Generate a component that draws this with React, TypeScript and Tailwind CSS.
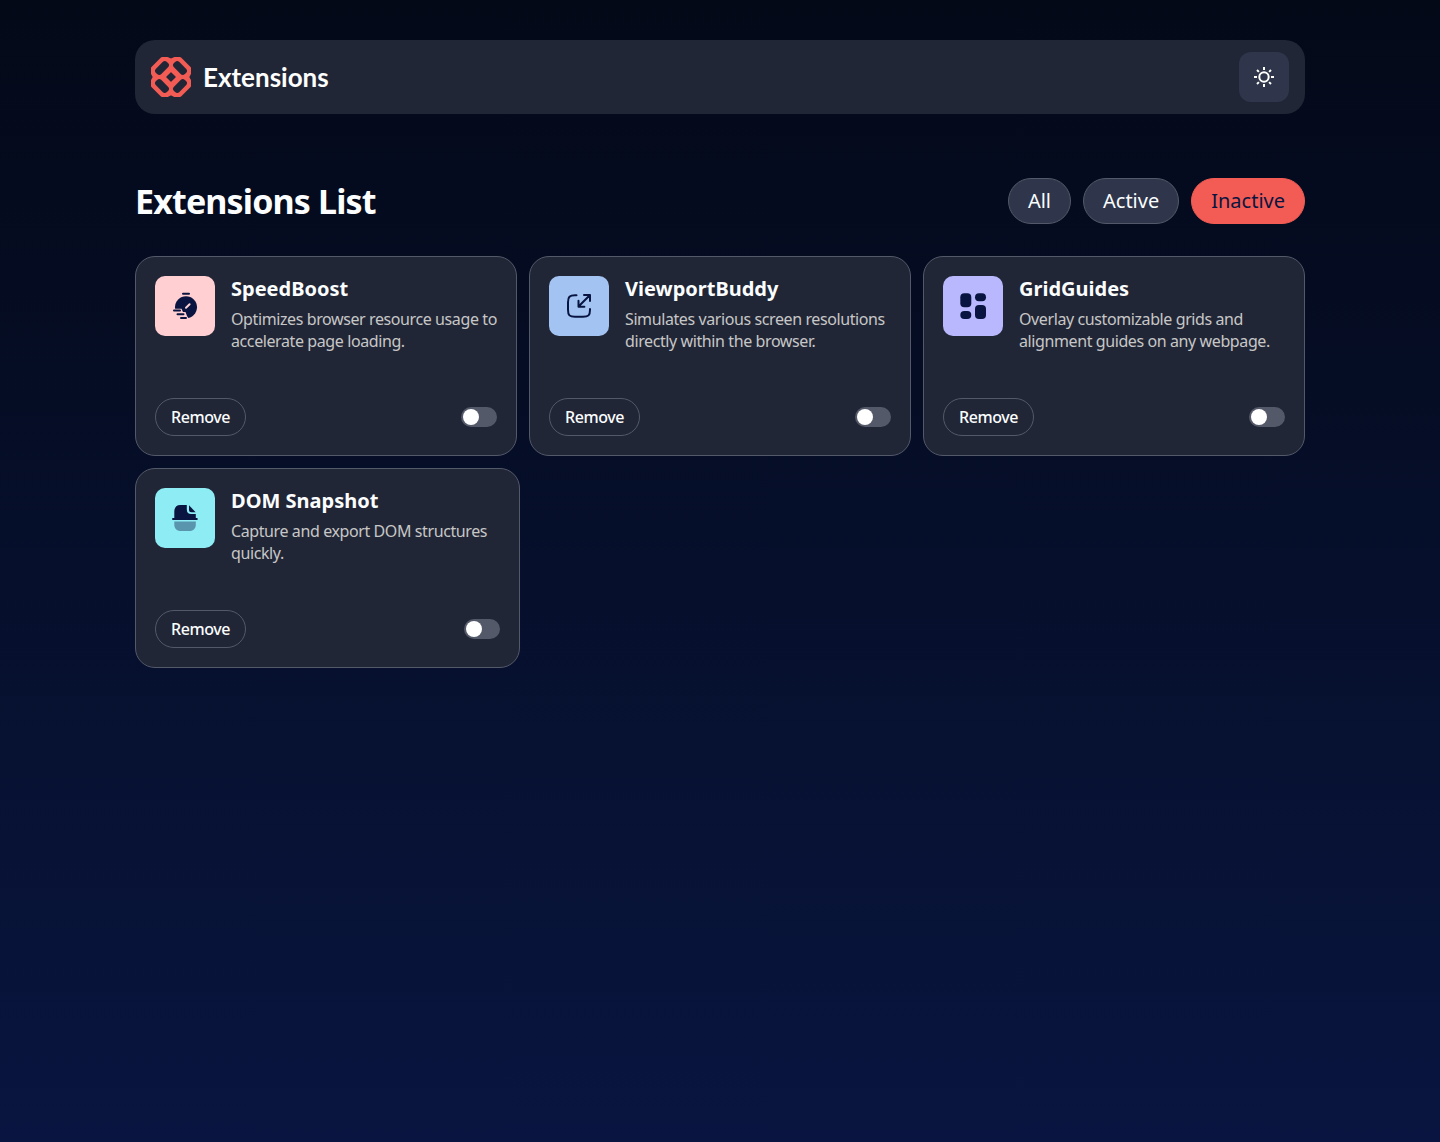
import { useState } from "react";
import type { ReactNode } from "react";

type Extension = {
  name: string;
  description: string;
  tile: string;
  icon: ReactNode;
};

const NAVY = "#091540";

function LogoMark() {
  return (
    <svg viewBox="0 0 40 40" className="size-10" strokeLinejoin="round" aria-hidden="true">
      <path
        d="M11 1.500H16.500L20 3.400 23.500 1.500H29L38.500 11V16.500L36.600 20 38.500 23.500V29L29 38.500H23.500L20 36.600 16.500 38.500H11L1.500 29V23.500L3.400 20 1.500 16.500V11Z"
        fill="#f25c54"
        stroke="#f25c54"
        strokeWidth="3"
      />
      <g fill="#212636">
        <rect x="3.300" y="7.200" width="15.400" height="7.600" rx="3" transform="rotate(-45 11 11)" />
        <rect x="21.300" y="7.200" width="15.400" height="7.600" rx="3" transform="rotate(45 29 11)" />
        <rect x="3.300" y="25.200" width="15.400" height="7.600" rx="3" transform="rotate(45 11 29)" />
        <rect x="21.300" y="25.200" width="15.400" height="7.600" rx="3" transform="rotate(-45 29 29)" />
        <rect x="16.500" y="16.500" width="7" height="7" rx="0.6" transform="rotate(45 20 20)" />
      </g>
    </svg>
  );
}

function SunIcon() {
  return (
    <svg viewBox="0 0 22 22" className="size-[22px]" aria-hidden="true">
      <g fill="none" stroke="#fff" strokeWidth="2">
        <circle cx="11" cy="11" r="4.7" />
        <path d="M11 1v3M11 18v3M1 11h3M18 11h3M4 4l1.900 1.900M16.100 16.100L18 18M4 18l1.900-1.900M16.100 5.900L18 4" />
      </g>
    </svg>
  );
}

function StopwatchIcon() {
  return (
    <svg viewBox="0 0 60 60" className="size-[60px]" aria-hidden="true">
      <circle cx="31" cy="31.300" r="11" fill={NAVY} />
      <path d="M28 17.800h6" stroke={NAVY} strokeWidth="2" strokeLinecap="round" />
      <path d="M31 31.800l3.600-3.600" stroke="#ffcfd2" strokeWidth="2" strokeLinecap="round" />
      <path d="M16 32.800h10.500l1.500 3.200h2.500l1.500 4 2.500 4H16z" fill="#ffcfd2" />
      <path d="M19 34.600h6M22.500 38.200h6M26 42h5" stroke={NAVY} strokeWidth="2" strokeLinecap="round" />
    </svg>
  );
}

function ViewportIcon() {
  return (
    <svg viewBox="0 0 60 60" className="size-[60px]" aria-hidden="true">
      <g fill="none" stroke={NAVY} strokeWidth="2" strokeLinecap="round" strokeLinejoin="round">
        <path d="M27.500 19.300H26c-5.500 0-7 1.500-7 7v7.500c0 5.500 1.500 7 7 7h8c5.500 0 7-1.500 7-7V33" />
        <path d="M29.500 30.500L41 19M35 19h6v6M29.500 24.800v5.900h5.900" />
      </g>
    </svg>
  );
}

function GridIcon() {
  return (
    <svg viewBox="0 0 60 60" className="size-[60px]" fill={NAVY} aria-hidden="true">
      <rect x="17.300" y="17.300" width="11" height="14" rx="4" />
      <rect x="32" y="17.300" width="11" height="8" rx="4" />
      <rect x="17.300" y="35" width="11" height="8" rx="4" />
      <rect x="32" y="29" width="11" height="14" rx="4" />
    </svg>
  );
}

function SnapshotIcon() {
  return (
    <svg viewBox="0 0 60 60" className="size-[60px]" fill={NAVY} aria-hidden="true">
      <path d="M19.300 30v-6.500c0-4 2.200-6.500 6-6.500h6.500v4.500c0 3 1.500 4.600 4.500 4.600h4.500V30h1a1 1 0 0 1 0 2H18a1 1 0 0 1 0-2z" />
      <path d="M34 17.300l6.600 6.900h-4.100c-1.700 0-2.500-.8-2.500-2.500z" />
      <path d="M19.300 33.500h21.500v3c0 4-2.400 6.500-6.400 6.500h-8.700c-4 0-6.400-2.500-6.400-6.500z" opacity=".4" />
    </svg>
  );
}

const extensions: Extension[] = [
  {
    name: "SpeedBoost",
    description: "Optimizes browser resource usage to accelerate page loading.",
    tile: "bg-[#ffcfd2]",
    icon: <StopwatchIcon />,
  },
  {
    name: "ViewportBuddy",
    description: "Simulates various screen resolutions directly within the browser.",
    tile: "bg-[#a3c4f3]",
    icon: <ViewportIcon />,
  },
  {
    name: "GridGuides",
    description: "Overlay customizable grids and alignment guides on any webpage.",
    tile: "bg-[#b9b8ff]",
    icon: <GridIcon />,
  },
  {
    name: "DOM Snapshot",
    description: "Capture and export DOM structures quickly.",
    tile: "bg-[#8eecf5]",
    icon: <SnapshotIcon />,
  },
];

function ExtensionCard({ name, description, tile, icon }: Extension) {
  const [active, setActive] = useState(false);
  return (
    <li className="flex min-h-[200px] max-w-[385px] grow basis-[350px] flex-col justify-between rounded-[20px] border border-[#545969] bg-[#212636] p-[19px]">
      <div className="flex items-start gap-4">
        <div className={`shrink-0 overflow-hidden rounded-[10px] ${tile}`}>{icon}</div>
        <div>
          <h2 className="text-xl leading-[26px] font-bold text-[#fbfdfe]">{name}</h2>
          <p className="mt-1.5 text-base leading-[22px] tracking-tight text-[#c7c7c7]">{description}</p>
        </div>
      </div>
      <div className="flex items-center justify-between">
        <button
          type="button"
          className="h-[38px] rounded-full border border-[#545969] px-[15px] text-base font-medium tracking-tight text-[#fbfdfe]"
        >
          Remove
        </button>
        <input
          type="checkbox"
          role="switch"
          aria-label={`Enable ${name}`}
          checked={active}
          onChange={(event) => setActive(event.target.checked)}
          className="flex h-5 w-9 cursor-pointer appearance-none items-center rounded-full bg-[#545969] px-0.5 before:size-4 before:rounded-full before:bg-white checked:justify-end checked:bg-[#f25c54]"
        />
      </div>
    </li>
  );
}

const filters = ["All", "Active", "Inactive"];

export default function App() {
  const [filter, setFilter] = useState("Inactive");
  return (
    <div className="min-h-screen bg-linear-to-b from-[#040918] to-[#091540] px-6 py-10 font-['Noto_Sans',sans-serif]">
      <div className="mx-auto max-w-[1170px]">
        <header className="flex items-center justify-between rounded-[20px] bg-[#212636] px-4 py-3">
          <div className="flex items-center gap-3">
            <LogoMark />
            <span className="font-['Lato','Noto_Sans',sans-serif] text-[26px] leading-8 font-bold text-white">Extensions</span>
          </div>
          <button
            type="button"
            aria-label="Switch to light theme"
            className="flex size-[50px] items-center justify-center rounded-xl bg-[#2f364b]"
          >
            <SunIcon />
          </button>
        </header>
        <main className="mt-16">
          <div className="flex flex-wrap items-center justify-between gap-4">
            <h1 className="text-[34px] leading-[46px] font-bold tracking-tight text-[#fbfdfe]">Extensions List</h1>
            <div className="flex gap-3">
              {filters.map((label) => (
                <button
                  key={label}
                  type="button"
                  aria-pressed={filter === label}
                  onClick={() => setFilter(label)}
                  className={`h-[46px] rounded-full border px-[19px] text-xl ${
                    filter === label
                      ? "border-[#f25c54] bg-[#f25c54] text-[#091540]"
                      : "border-[#545969] bg-[#2f364b] text-[#fbfdfe]"
                  }`}
                >
                  {label}
                </button>
              ))}
            </div>
          </div>
          <ul className="mt-8 flex flex-wrap gap-3">
            {extensions.map((extension) => (
              <ExtensionCard key={extension.name} {...extension} />
            ))}
          </ul>
        </main>
      </div>
    </div>
  );
}
